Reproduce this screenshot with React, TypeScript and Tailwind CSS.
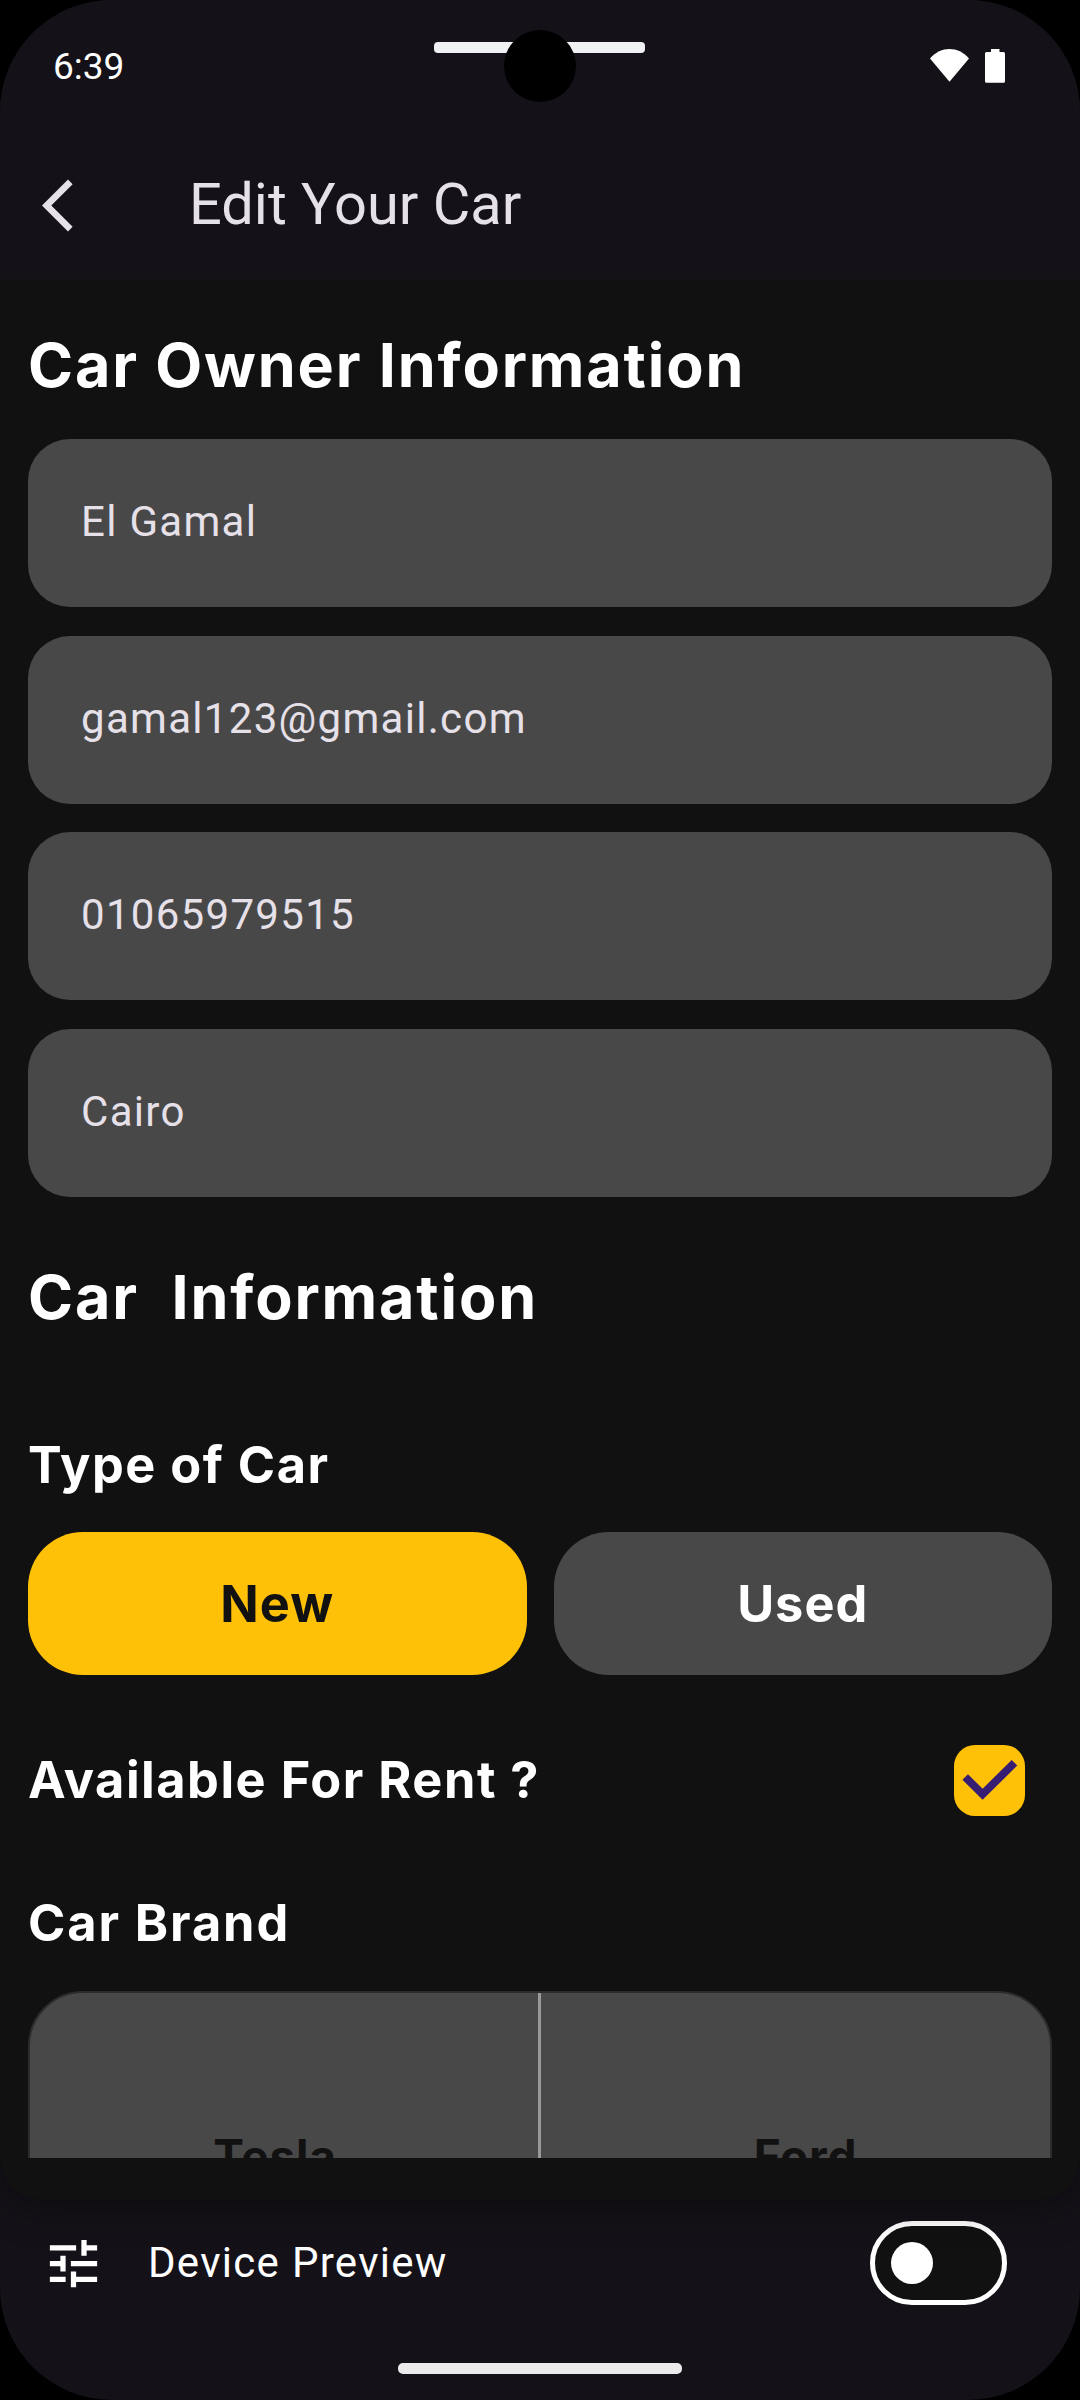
import React from "react";

const fields = ["El Gamal", "gamal123@gmail.com", "01065979515", "Cairo"];

function StatusBar() {
  return (
    <div className="relative flex h-[132px] items-start justify-between pl-[53px] pr-[75px]">
      <span className="mt-[46px] text-[37px] leading-[42px] text-white">6:39</span>
      <div className="mt-[49px] flex gap-[16px]">
        <svg className="h-[33px] w-[39px]" viewBox="0 0 39 33" fill="#fff">
          <path d="M0 9.4C11-3.1 28-3.1 39 9.4L19.5 32.8Z" />
        </svg>
        <svg className="h-[34px] w-[20px]" viewBox="0 0 20 34" fill="#fff">
          <path d="M6 0H14.5V3H18.5Q20 3 20 4.5V32.3Q20 33.8 18.5 33.8H1.5Q0 33.8 0 32.3V4.5Q0 3 1.5 3H6Z" />
        </svg>
      </div>
      <div className="absolute left-[434px] top-[42px] h-[11px] w-[211px] rounded-[4px] bg-[#eff1f3]" />
      <div className="absolute left-[503.5px] top-[29.5px] size-[72.5px] rounded-full bg-black" />
    </div>
  );
}

function AppBar() {
  return (
    <header className="flex h-[147px] items-center pl-[42px] text-[#e6e0e9]">
      <svg className="h-[63px] w-[63px]" viewBox="0 0 24 24" fill="currentColor">
        <path d="M11.67 3.87L9.9 2.1 0 12l9.9 9.9 1.77-1.77L3.54 12z" />
      </svg>
      <h1 className="mb-[4px] ml-[84px] whitespace-nowrap text-[57.75px] leading-[74px]">Edit Your Car</h1>
    </header>
  );
}

export default function App() {
  return (
    <div className="h-[2400px] w-[1080px] overflow-hidden bg-black font-['Roboto',sans-serif]">
      <div className="flex h-full flex-col overflow-hidden rounded-[112px] bg-[#141118]">
        <div className="relative z-10 h-[2200px] shrink-0 overflow-hidden rounded-b-[42px] bg-[#111111] shadow-[0_0_42px_rgba(0,0,0,0.5)]">
          <div className="bg-[#141118]">
            <StatusBar />
            <AppBar />
          </div>
          <main className="h-[1879px] overflow-hidden px-[28px] font-['Inter',sans-serif] text-[50.5px] font-bold tracking-[1.5px] text-white">
            <h2 className="mt-[46px] whitespace-pre text-[61px] leading-[80px] tracking-[1.85px]">Car Owner Information</h2>
            <div className="mt-[34px] flex flex-col gap-[28.6px]">
              {fields.map((value) => (
                <div
                  key={value}
                  className="flex h-[168px] items-center rounded-[42px] bg-[#484848] px-[53px] pb-[3px] font-['Roboto',sans-serif] text-[42px] font-normal tracking-[1.3px] text-[#e6e0e9]"
                >
                  {value}
                </div>
              ))}
            </div>
            <h2 className="mt-[60px] whitespace-pre text-[61px] leading-[80px] tracking-[1.85px]">Car  Information</h2>
            <h3 className="mt-[94px] leading-[68px]">Type of Car</h3>
            <div className="mt-[33.5px] flex gap-[27px] tracking-[1px]">
              <div className="flex h-[142.3px] flex-1 items-center justify-center rounded-[55px] bg-[#ffc107] text-[#111111]">New</div>
              <div className="flex h-[142.3px] flex-1 items-center justify-center rounded-[55px] bg-[#484848]">Used</div>
            </div>
            <div className="mt-[70.7px] flex h-[71px] items-center justify-between pr-[27px]">
              <h3 className="mb-[1px] whitespace-nowrap leading-[68px]">Available For Rent ?</h3>
              <svg className="size-[71px]" viewBox="0 0 71 71">
                <rect width="71" height="71" rx="21" fill="#ffc107" />
                <path d="M11.2 32L28.6 49.3L60.5 17.7" fill="none" stroke="#381e72" strokeWidth="7.9" />
              </svg>
            </div>
            <h3 className="mt-[73px] leading-[68px] tracking-[1.9px]">Car Brand</h3>
            <div className="mt-[33.7px] flex h-[420px] rounded-[55px] border-2 border-[#2c2c2c] bg-[#484848] text-[46px] tracking-[0.8px] text-[#111111]">
              <div className="w-[511px] border-r-[3px] border-[#999999] pr-[18px] pt-[135px] text-center leading-[56px]">Tesla</div>
              <div className="flex-1 pl-[20px] pt-[135px] text-center leading-[56px]">Ford</div>
            </div>
          </main>
        </div>
        <div className="flex h-[126px] items-center pl-[42px] pr-[73px]">
          <svg className="size-[63px]" viewBox="0 0 24 24" fill="#fff">
            <path d="M3 17v2h6v-2H3zM3 5v2h10V5H3zm10 16v-2h8v-2h-8v-2h-2v6h2zM7 9v2H3v2h4v2h2V9H7zm14 4v-2H11v2h10zm-6-4h2V7h4V5h-4V3h-2v6z" />
          </svg>
          <span className="mb-[2px] ml-[43px] text-[42px] tracking-[1.3px] text-white">Device Preview</span>
          <div className="ml-auto flex h-[84px] w-[137px] items-center rounded-full border-[5.25px] border-white bg-[#111111] pl-[16px]">
            <div className="size-[42px] rounded-full bg-white" />
          </div>
        </div>
        <div className="mx-auto mt-[37px] h-[11px] w-[284px] rounded-[5px] bg-[#ebebeb]" />
      </div>
    </div>
  );
}
